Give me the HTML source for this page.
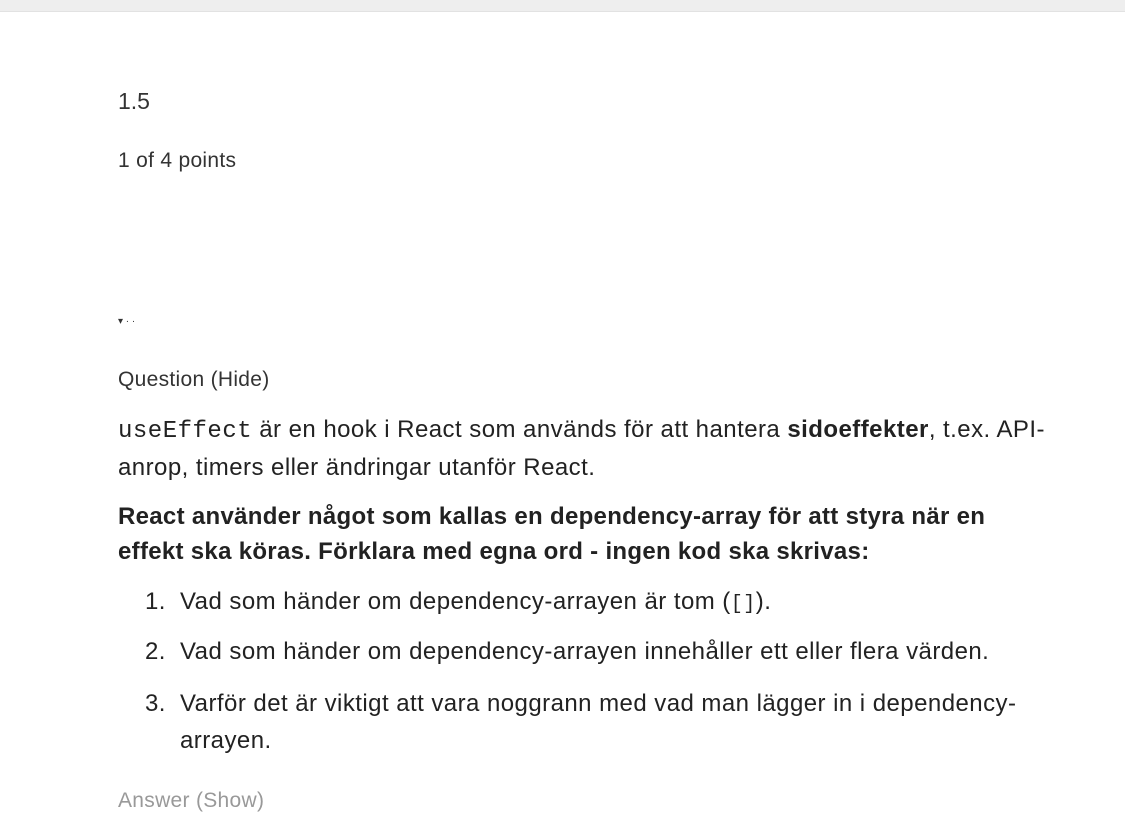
<!DOCTYPE html>
<html><head><meta charset="utf-8"><style>
body{margin:0;width:1125px;height:836px;background:#fff;font-family:"Liberation Sans",sans-serif;color:#222;overflow:hidden;position:relative}
.bar{position:absolute;left:0;top:0;width:1125px;height:11px;background:#eeeeee;border-bottom:1px solid #e2e2e2}
.t{position:absolute;left:118px;white-space:nowrap}
.b{font-size:24px;letter-spacing:0.45px}
.s{font-size:21px;letter-spacing:0.3px;color:#333}
code{font-family:"Liberation Mono",monospace;font-size:24px;letter-spacing:0.5px}
.n{position:absolute;left:145px;white-space:nowrap}
.li{position:absolute;left:180px;white-space:nowrap}
</style></head><body>
<div class="bar"></div>
<div class="t" style="top:88px;font-size:23px;color:#333">1.5</div>
<div class="t s" style="top:149px">1 of 4 points</div>
<div class="t" style="top:316px;font-size:10px;color:#333">▾ · ·</div>
<div class="t s" style="top:368px">Question (Hide)</div>
<div class="t b" style="top:412px;line-height:36px"><code>useEffect</code> är en hook i React som används för att hantera <b>sidoeffekter</b>, t.ex. API-<br>anrop, timers eller ändringar utanför React.</div>
<div class="t b" style="top:499px;line-height:35px;font-weight:bold;letter-spacing:0.3px">React använder något som kallas en dependency-array för att styra när en<br>effekt ska köras. Förklara med egna ord - ingen kod ska skrivas:</div>
<div class="n b" style="top:588px">1.</div><div class="li b" style="top:588px">Vad som händer om dependency-arrayen är tom (<code style="font-size:20px">[]</code>).</div>
<div class="n b" style="top:638px">2.</div><div class="li b" style="top:638px">Vad som händer om dependency-arrayen innehåller ett eller flera värden.</div>
<div class="n b" style="top:690px">3.</div><div class="li b" style="top:685px;line-height:37px">Varför det är viktigt att vara noggrann med vad man lägger in i dependency-<br>arrayen.</div>
<div class="t s" style="top:789px;color:#999">Answer (Show)</div>
</body></html>
